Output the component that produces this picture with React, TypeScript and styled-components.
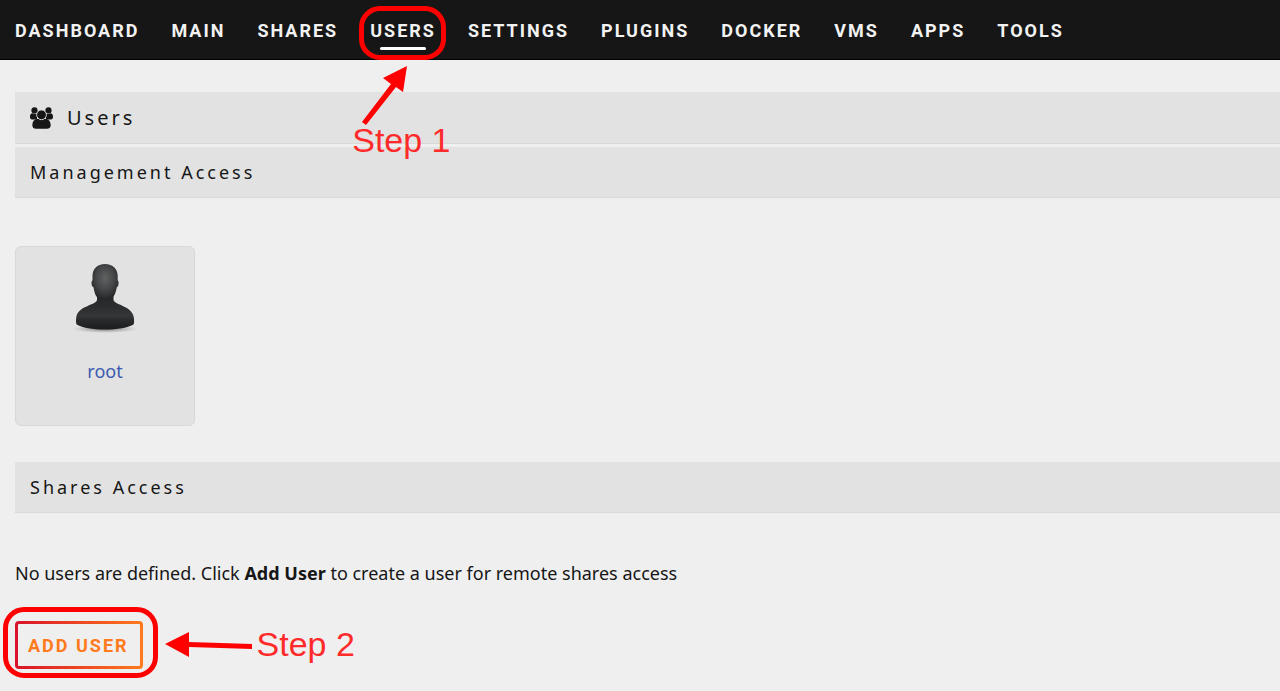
import React from "react";
import styled, { createGlobalStyle } from "styled-components";

const GlobalStyle = createGlobalStyle`
  *, *::before, *::after { box-sizing: border-box; }
  body {
    margin: 0;
    background: #efefef;
    color: #161616;
    font-family: "Noto Sans", "Open Sans", sans-serif;
    font-size: 18px;
    line-height: 24px;
  }
`;

const NavBar = styled.nav`
  display: flex;
  gap: 32px;
  height: 60px;
  padding: 2px 15px 0;
  align-items: center;
  background: #161616;
  border-bottom: 1px solid #000;
`;

const NavItem = styled.div`
  position: relative;
`;

const NavLink = styled.a<{ $active?: boolean }>`
  position: relative;
  display: block;
  color: #f2f2f2;
  font-family: Roboto, sans-serif;
  font-size: 18px;
  font-weight: 700;
  letter-spacing: 2px;
  text-decoration: none;
  text-transform: uppercase;

  &::after {
    content: "";
    display: ${(p) => (p.$active ? "block" : "none")};
    position: absolute;
    left: 10px;
    right: 10px;
    bottom: -7px;
    height: 3px;
    border-radius: 2px;
    background: #fff;
  }
`;

const Content = styled.main`
  padding: 32px 0 22px 15px;
`;

const TitleBar = styled.h1`
  display: flex;
  align-items: center;
  gap: 14px;
  height: 52px;
  margin: 0 0 3px;
  padding: 0 15px;
  background: #e2e2e2;
  border-bottom: 1px solid #d9d9d9;
  font-size: 20px;
  font-weight: 400;
  letter-spacing: 3px;
`;

const SectionBar = styled.h2`
  display: flex;
  align-items: center;
  height: 51px;
  margin: 0;
  padding: 0 15px;
  background: #e2e2e2;
  border-bottom: 1px solid #d9d9d9;
  font-size: 18px;
  font-weight: 400;
  letter-spacing: 3px;
`;

const UserList = styled.div`
  display: flex;
  padding: 48px 0 36px;
`;

const UserCard = styled.a`
  display: flex;
  flex-direction: column;
  align-items: center;
  gap: 26px;
  width: 180px;
  height: 180px;
  padding-top: 14px;
  background: #e2e2e2;
  border: 1px solid #d8d8d8;
  border-radius: 6px;
  color: #3b5bb0;
  text-decoration: none;
`;

const Message = styled.p`
  margin: 0;
  padding: 48px 0 36px;
`;

const ButtonArea = styled.div`
  position: relative;
  width: max-content;
`;

const AddButton = styled.button`
  display: block;
  height: 48px;
  padding: 0 11px 0 10px;
  border: 3px solid transparent;
  border-radius: 4px;
  background: linear-gradient(#efefef, #efefef) padding-box,
    linear-gradient(90deg, #d8122a, #ff7a1c) border-box;
  color: #ff7a1c;
  font-family: Roboto, sans-serif;
  font-size: 18px;
  font-weight: 700;
  letter-spacing: 2px;
  text-transform: uppercase;
`;

const Ring = styled.span`
  position: absolute;
  inset: -14px -15px -9px -12px;
  border: 5px solid #ff0000;
  border-radius: 21px;
  pointer-events: none;
`;

const NavRing = styled(Ring)`
  inset: -13px -10px -17px -11px;
`;

const Annotation = styled.div`
  position: absolute;
  z-index: 1;
  display: flex;
  color: #ff2a2a;
  fill: #ff0000;
  font: 34px/40px "Liberation Sans", Arial, sans-serif;
  white-space: nowrap;
  pointer-events: none;
`;

const NavAnnotation = styled(Annotation)`
  flex-direction: column;
  top: 45px;
  left: -18px;

  svg { margin: 0 0 -8px 8px; }
`;

const ButtonAnnotation = styled(Annotation)`
  align-items: center;
  gap: 5px;
  top: 3px;
  left: calc(100% + 21px);
`;

const GroupIcon = () => (
  <svg width="23" height="22" viewBox="0 0 23 22" fill="#161616" aria-hidden="true">
    <circle cx="4.5" cy="3.4" r="3.1" />
    <circle cx="18.5" cy="3.4" r="3.1" />
    <path d="M2 6.200C.7 6.600 0 7.800 0 9.800c0 1.700.8 2.700 2 2.700h5V7L4.500 7z" />
    <path d="M21 6.200c1.300.4 2 1.600 2 3.600 0 1.700-.8 2.700-2 2.700h-5V7l2.500 0z" />
    <path
      d="M6.500 12c-2.600.5-4.200 2.900-4.200 6.300C2.300 20.800 4 21.800 6 21.800h11c2 0 3.700-1 3.700-3.500 0-3.400-1.600-5.800-4.200-6.300z"
    />
    <circle cx="11.500" cy="7.800" r="4.900" stroke="#e2e2e2" strokeWidth=".9" />
  </svg>
);

const Avatar = () => (
  <svg width="72" height="72" viewBox="0 0 72 72" aria-hidden="true">
    <defs>
      <radialGradient id="head" cx=".5" cy=".4" r=".6">
        <stop offset="0" stopColor="#606262" />
        <stop offset=".55" stopColor="#444647" />
        <stop offset="1" stopColor="#252627" />
      </radialGradient>
      <linearGradient id="body" x1="0" y1="0" x2="0" y2="1">
        <stop offset="0" stopColor="#252627" />
        <stop offset=".4" stopColor="#2c2d2e" />
        <stop offset=".62" stopColor="#363738" />
        <stop offset=".72" stopColor="#2b2c2d" />
        <stop offset="1" stopColor="#1b1c1c" />
      </linearGradient>
      <radialGradient id="shadow">
        <stop offset="0" stopColor="#555" stopOpacity=".8" />
        <stop offset="1" stopColor="#888" stopOpacity="0" />
      </radialGradient>
    </defs>
    <ellipse cx="36" cy="68" rx="33" ry="4" fill="url(#shadow)" />
    <path
      d="M28 32v7c-1 5-18 6-20.500 16-.6 3-.8 7 .2 8.500C12 66.500 24 68.500 36 68.500s24-2 28.500-5c1-1.500.7-5.500 0-8.500C62 45 46 44 44.500 39v-7z"
      fill="url(#body)"
    />
    <path
      d="M36 3c-8 0-12.500 5-12.500 12v4.500c-1.500.2-1.300 6 1 6.800 1 5.500 2 8.700 4.500 10.700 4 2 10 2 14 0 2.500-2 3.800-5.200 4.800-10.700 2.200-.8 2.300-6.600.9-6.800V15C48.700 8 44 3 36 3z"
      fill="url(#head)"
    />
  </svg>
);

const links = [
  "Dashboard", "Main", "Shares", "Users", "Settings",
  "Plugins", "Docker", "VMs", "Apps", "Tools",
];

export default function App() {
  return (
    <>
      <GlobalStyle />
      <NavBar>
        {links.map((name) => (
          <NavItem key={name}>
            <NavLink href="#" $active={name === "Users"}>{name}</NavLink>
            {name === "Users" && (
              <>
                <NavRing />
                <NavAnnotation>
                  <svg width="50" height="64" viewBox="0 0 50 64" aria-hidden="true">
                    <path d="M47 2L43 28L36 23L6 61L2 58L31 20L23 14z" />
                  </svg>
                  Step 1
                </NavAnnotation>
              </>
            )}
          </NavItem>
        ))}
      </NavBar>
      <Content>
        <TitleBar><GroupIcon />Users</TitleBar>
        <SectionBar>Management Access</SectionBar>
        <UserList>
          <UserCard href="#"><Avatar />root</UserCard>
        </UserList>
        <SectionBar>Shares Access</SectionBar>
        <Message>
          No users are defined. Click <b>Add User</b> to create a user for remote shares access
        </Message>
        <ButtonArea>
          <AddButton type="button">Add User</AddButton>
          <Ring />
          <ButtonAnnotation>
            <svg width="88" height="28" viewBox="0 0 88 28" aria-hidden="true">
              <path d="M1 14L25 2L25 12L88 14L88 19L25 17L25 27z" />
            </svg>
            Step 2
          </ButtonAnnotation>
        </ButtonArea>
      </Content>
    </>
  );
}
